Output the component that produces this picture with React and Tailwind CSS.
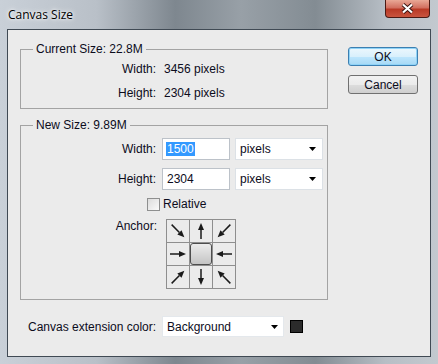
import React from "react";

function Arrow({ dx, dy }) {
  const len = Math.hypot(dx, dy);
  const ux = dx / len;
  const uy = dy / len;
  const h = dx && dy ? 9 : 8;
  const sx = 11 - ux * h;
  const sy = 11 - uy * h;
  const tx = 11 + ux * h;
  const ty = 11 + uy * h;
  const bx = tx - ux * 7;
  const by = ty - uy * 7;
  const px = -uy * 3;
  const py = ux * 3;
  return (
    <svg width="22" height="22" viewBox="0 0 22 22">
      <line x1={sx} y1={sy} x2={bx} y2={by} stroke="#1a1a1a" strokeWidth="1.5" />
      <polygon
        points={`${tx},${ty} ${bx + px},${by + py} ${bx - px},${by - py}`}
        fill="#1a1a1a"
      />
    </svg>
  );
}

function Select({ label, width }) {
  return (
    <div
      className={`${width} h-[22px] flex items-center justify-between bg-white border border-[#dce1e6] pl-[4px] pr-[6px]`}
    >
      <span>{label}</span>
      <svg width="7" height="4" viewBox="0 0 7 4">
        <polygon points="0,0 7,0 3.5,4" fill="#000" />
      </svg>
    </div>
  );
}

const arrows = [
  [1, 1], [0, -1], [-1, 1],
  [1, 0], null, [-1, 0],
  [1, -1], [0, 1], [-1, -1],
];

export default function App() {
  return (
    <div className="w-[438px] h-[364px] flex flex-col px-[7px] pb-[7px] bg-[linear-gradient(90deg,#c9d0d8_0%,#b9c0c8_22%,#7e878f_40%,#98a0a7_55%,#838c93_72%,#b7bec5_88%,#c3c9cf_100%)] font-['Liberation_Sans',Arial,sans-serif] text-[12px] text-[#0c0c1c]">
      <div className="h-[29px] flex items-start">
        <div className="pt-[7px] pl-[1px] font-['Open_Sans',sans-serif] text-[12px] leading-[16px] text-black [text-shadow:0_0_6px_#fff,0_0_3px_#fff]">
          Canvas Size
        </div>
        <div className="ml-auto mr-[1px] w-[45px] h-[18px] flex items-center justify-center rounded-b-[4px] border border-t-0 border-[#4a1a14] bg-[linear-gradient(180deg,#e9a896_0%,#d27060_45%,#b93a26_55%,#c9543e_100%)]">
          <svg width="13" height="11" viewBox="0 0 13 11">
            <path d="M2 1.5 L11 9.5 M11 1.5 L2 9.5" stroke="#3a1410" strokeWidth="4" />
            <path d="M2 1.5 L11 9.5 M11 1.5 L2 9.5" stroke="#fff" strokeWidth="2.2" />
          </svg>
        </div>
      </div>

      <div className="flex-1 border border-[#404a54] bg-[#ebebeb] flex flex-col">
        <div className="flex items-start">
          <div className="ml-[12px] w-[308px] flex flex-col">
            <fieldset className="mt-[12px] border border-[#a3a3a3] pb-[7px]">
              <legend className="ml-[12px] px-[3px] leading-[14px]">Current Size: 22.8M</legend>
              <div className="mt-[5px] flex leading-[16px]">
                <span className="w-[135px] text-right">Width:</span>
                <span className="ml-[8px]">3456 pixels</span>
              </div>
              <div className="mt-[8px] flex leading-[16px]">
                <span className="w-[135px] text-right">Height:</span>
                <span className="ml-[8px]">2304 pixels</span>
              </div>
            </fieldset>

            <fieldset className="mt-[9px] border border-[#a3a3a3] pb-[10px]">
              <legend className="ml-[12px] px-[3px] leading-[14px]">New Size: 9.89M</legend>
              <div className="mt-[6px] flex items-center">
                <span className="w-[135px] text-right">Width:</span>
                <div className="ml-[6px] w-[68px] h-[22px] flex items-center bg-white border border-[#bcc2c9] pl-[3px]">
                  <span className="bg-[#3399ff] text-white leading-[14px] px-[1px]">1500</span>
                </div>
                <div className="ml-[5px]">
                  <Select label="pixels" width="w-[88px]" />
                </div>
              </div>
              <div className="mt-[8px] flex items-center">
                <span className="w-[135px] text-right">Height:</span>
                <div className="ml-[6px] w-[68px] h-[22px] flex items-center bg-white border border-[#bcc2c9] pl-[4px]">
                  <span>2304</span>
                </div>
                <div className="ml-[5px]">
                  <Select label="pixels" width="w-[88px]" />
                </div>
              </div>
              <div className="mt-[6px] h-[16px] flex items-center pl-[126px]">
                <div className="w-[13px] h-[13px] border border-[#8e8f8f] bg-[linear-gradient(135deg,#dcdcdc,#fafafa)]" />
                <span className="ml-[3px] leading-[16px]">Relative</span>
              </div>
              <div className="mt-[7px] flex items-start">
                <span className="w-[136px] text-right leading-[14px]">Anchor:</span>
                <div className="ml-[9px] grid grid-cols-[22px_22px_22px] grid-rows-[22px_22px_22px] gap-px p-px bg-[#8e8e8e]">
                  {arrows.map((a, i) => (
                    <div key={i} className="bg-[#ebebeb] flex items-center justify-center">
                      {a ? (
                        <Arrow dx={a[0]} dy={a[1]} />
                      ) : (
                        <div className="w-[24px] h-[22px] rounded-[3px] border border-[#4d4d4d] bg-[linear-gradient(180deg,#ececec,#c4c4c4)]" />
                      )}
                    </div>
                  ))}
                </div>
              </div>
            </fieldset>
          </div>

          <div className="ml-[20px] mt-[17px] flex flex-col gap-[9px]">
            <div className="w-[70px] h-[19px] flex items-center justify-center rounded-[3px] border border-[#3c7fb1] bg-[linear-gradient(180deg,#ecf7fd_0%,#d9f0fc_50%,#bee6fd_51%,#a7d9f5_100%)] shadow-[0_0_0_1px_#8fd3f7_inset]">
              OK
            </div>
            <div className="w-[70px] h-[19px] flex items-center justify-center rounded-[3px] border border-[#707070] bg-[linear-gradient(180deg,#f2f2f2_0%,#ebebeb_50%,#dddddd_51%,#cfcfcf_100%)]">
              Cancel
            </div>
          </div>
        </div>

        <div className="mt-[16px] pl-[20px] flex items-center">
          <span className="w-[134px]">Canvas extension color:</span>
          <div className="h-[21px] w-[122px] flex items-center justify-between bg-white border border-[#e4e8ec] pl-[4px] pr-[5px]">
            <span>Background</span>
            <svg width="7" height="4" viewBox="0 0 7 4">
              <polygon points="0,0 7,0 3.5,4" fill="#000" />
            </svg>
          </div>
          <div className="ml-[6px] w-[13px] h-[13px] border border-black bg-[#2b2b2b]" />
        </div>
      </div>
    </div>
  );
}
